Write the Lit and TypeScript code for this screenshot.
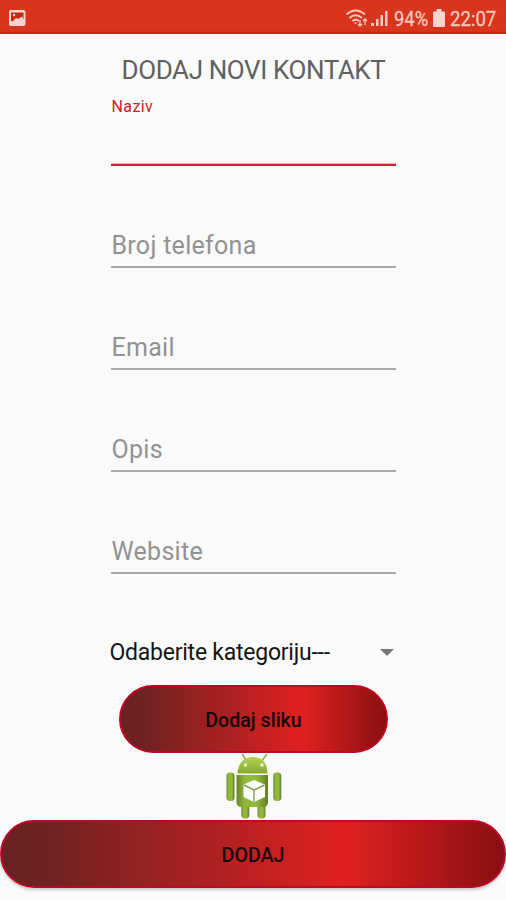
import { LitElement, html, css } from "lit";
import { customElement } from "lit/decorators.js";

@customElement("status-bar")
class StatusBar extends LitElement {
  static styles = css`
    :host { display: flex; align-items: center; height: 34px; box-sizing: border-box;
      padding: 2px 9px 0 8px; color: #f9c8bf; font-size: 20px;
      background: linear-gradient(#d8351c 0, #d8351c 31px, #cf1e12 33px, #cf1e12 34px); }
    .shot { width: 18px; height: 18px; margin-top: -1px; }
    .right { margin-left: auto; display: flex; align-items: center; height: 32px; }
    .wifi { width: 24px; height: 20px; }
    .signal { width: 18px; height: 20px; margin-left: 2px; }
    .battery { width: 12px; height: 20px; margin: 0 5px 0 4px; }
    .pct { width: 35px; margin-left: 5px; white-space: nowrap; }
    .time { width: 47px; white-space: nowrap; }
    .fit { display: inline-block; padding-top: 1px; transform-origin: 0 50%; transform: scaleX(.92); -webkit-text-stroke: .3px #f9c8bf; }
    .time .fit { transform: scaleX(.93); }
  `;
  render() {
    return html`
      <svg class="shot" viewBox="0 0 18 18"><rect x="1" y="1" width="16.5" height="16" rx="2" fill="#fbd5cd"/>
        <path d="M3 3.500h12.500v7l-1.500-3-4 2.500-2-1-3 3H3z" fill="#c9271b"/><circle cx="6" cy="6" r="1.200" fill="#fbd5cd"/></svg>
      <div class="right">
        <svg class="wifi" viewBox="0 0 24 20" fill="none" stroke="#f9c8bf" stroke-width="2">
          <path d="M1.500 6.500Q10.500-1.500 20 6.500M4.500 10Q10.500 4.500 17 10M7.500 13Q10.500 10.500 14 13"/>
          <circle cx="10.500" cy="15" r="1" fill="#f9c8bf" stroke="none"/>
          <path d="M15 12v6m-2-2 2 2 2-2M20 17v-6m-2 2 2-2 2 2" stroke-width="1.300"/></svg>
        <svg class="signal" viewBox="0 0 18 20" fill="#f9c8bf">
          <path d="M0 15h3v3H0zM5 11h2.500v7H5zM9.500 7H12v11H9.500zM14 3h2.500v15H14z"/></svg>
        <span class="pct"><span class="fit">94%</span></span>
        <svg class="battery" viewBox="0 0 12 20"><path d="M3.500 1h5v2.500H11q1 0 1 1V18q0 1-1 1H1q-1 0-1-1V4.500q0-1 1-1h2.500z" fill="#fbd5cd"/></svg>
        <span class="time"><span class="fit">22:07</span></span>
      </div>`;
  }
}

@customElement("app-root")
class AppRoot extends LitElement {
  static styles = css`
    :host { display: block; height: 900px; overflow: hidden; background: #fafafa;
      font-family: Roboto, "Noto Sans", sans-serif; }
    .form { width: 285px; margin-left: 111px; display: flex; flex-direction: column; }
    .title { height: 30px; line-height: 30px; margin-top: 21px; text-align: center; font-size: 26px;
      letter-spacing: -.4px; color: #606060; white-space: nowrap; }
    .field { height: 102px; box-sizing: border-box; display: flex; flex-direction: column;
      justify-content: flex-end; font-size: 25px; color: #929292; }
    .field span { line-height: 30px; padding: 0 0 5px .5px; letter-spacing: .28px; }
    .field::after { content: ""; height: 2px; background: #a9a9a9; }
    .field.active { height: 81px; justify-content: space-between; color: #cf2027; }
    .field.active span { font-size: 16px; line-height: 18px; padding: 13px 0 0 .5px; letter-spacing: .4px; }
    .field.active::after { height: 3px; background: linear-gradient(#e0737880 0 1px, #d0222a 1px); }
    .field.active + .field { margin-top: 1px; height: 101px; }
    .select { display: flex; align-items: center; justify-content: space-between; height: 32px;
      margin: 62px 2px 0 -1.5px; font-size: 23px; letter-spacing: -.24px; color: #151515; white-space: nowrap; }
    .caret { width: 14px; height: 7px; }
    .button { display: block; box-sizing: border-box; height: 68px; padding: 2px 0 0; border: 2px solid #bf0726;
      border-radius: 34px; font: 500 19.6px Roboto, sans-serif; color: #140708;
      background: linear-gradient(90deg, #672224 0, #702222 10%, #df2020 67%, #dc1f1f 70%, #870f10 100%) border-box;
      box-shadow: 0 2px 3px #0003; }
    .pick { width: 269px; margin: 17px 0 0 119px; box-shadow: none; }
    .submit { width: 506px; }
    .robot { display: block; width: 60px; height: 67px; margin: 0 0 0 224px; }
  `;
  render() {
    return html`
      <status-bar></status-bar>
      <div class="form">
        <div class="title">DODAJ NOVI KONTAKT</div>
        <div class="field active"><span>Naziv</span></div>
        ${["Broj telefona", "Email", "Opis", "Website"].map(t => html`<div class="field"><span>${t}</span></div>`)}
        <div class="select"><span>Odaberite kategoriju---</span>
          <svg class="caret" viewBox="0 0 14 7"><path d="M0 0h14L7 7z" fill="#767676"/></svg></div>
      </div>
      <button class="button pick">Dodaj sliku</button>
      <svg class="robot" viewBox="0 0 60 67">
        <defs>
          <linearGradient id="g"><stop offset="0" stop-color="#66862a"/><stop offset=".25" stop-color="#8fb53a"/><stop offset=".65" stop-color="#92b83a"/><stop offset="1" stop-color="#5f7e24"/></linearGradient>
          <linearGradient id="h" x2="0" y2="1"><stop offset="0" stop-color="#b2d452"/><stop offset="1" stop-color="#83a932"/></linearGradient>
        </defs>
        <path d="M18.500 1.500l3.500 5.500M42.500 1.500L38.500 7" stroke="#8fac45" stroke-width="1.500" stroke-linecap="round"/>
        <rect x="17.300" y="49" width="8" height="16.500" rx="3.500" fill="url(#g)"/>
        <rect x="33.500" y="49" width="8" height="16.500" rx="3.500" fill="url(#g)"/>
        <path d="M13.500 20.500C14 10 20 4 29 4s14.500 6 14.500 16.500z" fill="url(#h)"/>
        <circle cx="21.500" cy="12" r="1.700" fill="#f0f5df"/><circle cx="38" cy="12" r="1.700" fill="#f0f5df"/>
        <path d="M12.500 22h31.500v27q0 5-5 5H17.500q-5 0-5-5z" fill="url(#g)"/>
        <rect x="2.500" y="19.500" width="8" height="28.500" rx="3.500" fill="url(#g)"/>
        <rect x="49.300" y="19.500" width="8" height="28.500" rx="3.500" fill="url(#g)"/>
        <path d="M30 27l11 4.500v12.500l-11 5-10.500-5V31.500z" fill="#fff"/>
        <path d="M20 32l10 5 10.500-5M30 37v11.500" fill="none" stroke="#829b4b" stroke-width="1.400"/>
      </svg>
      <button class="button submit">DODAJ</button>`;
  }
}
